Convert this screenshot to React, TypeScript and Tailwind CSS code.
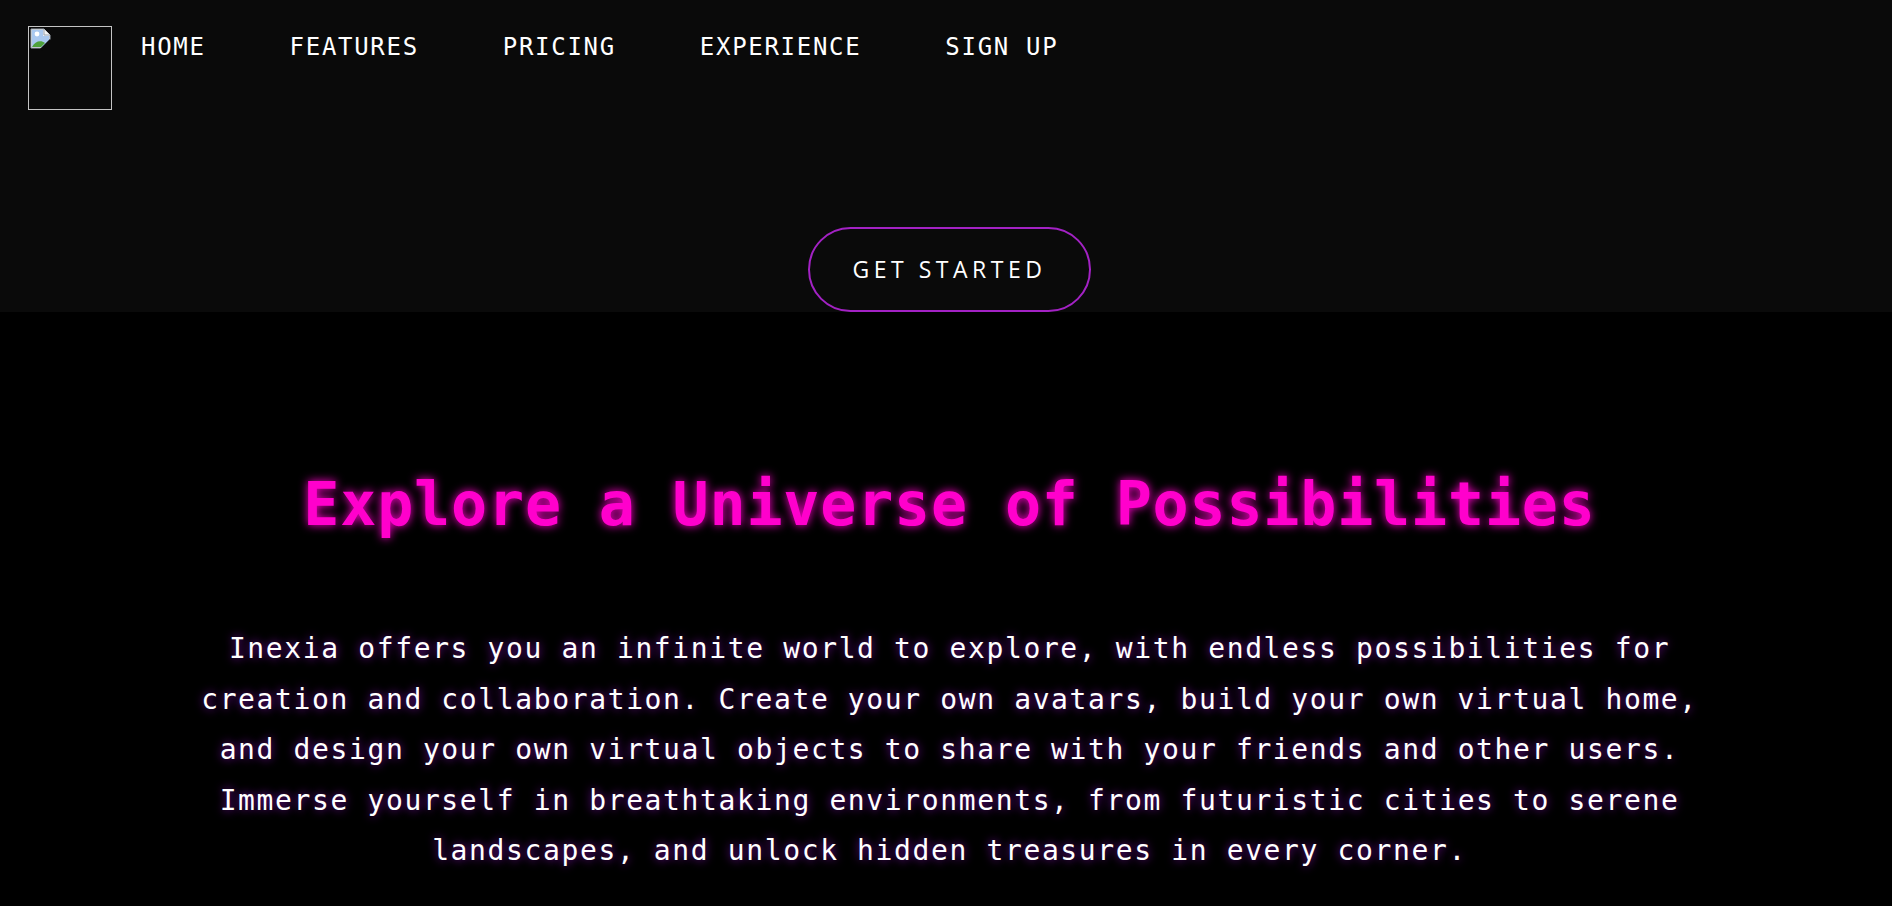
import React from "react";

const links = ["HOME", "FEATURES", "PRICING", "EXPERIENCE", "SIGN UP"];

function BrokenImage() {
  return (
    <svg width="22" height="24" viewBox="0 0 22 24" className="block">
      <path d="M1 1h13l6 6v7L14 20H1z" fill="#e9eef5" stroke="#9aa3ad" strokeWidth="1" />
      <path d="M2 2h11v6h6v5L13 19H2z" fill="#a9c8ef" />
      <circle cx="7" cy="6" r="2.4" fill="#ffffff" />
      <path d="M2 19c3-6 9-7 13-4l-4 4z" fill="#4fa23c" />
      <path d="M14 1v6h6" fill="#f4f4f4" stroke="#9aa3ad" strokeWidth="1" />
      <path d="M11 22l10-10" stroke="#0a0a0a" strokeWidth="3" />
    </svg>
  );
}

export default function App() {
  return (
    <div className="min-h-screen bg-black text-white font-['DejaVu_Sans_Mono',monospace]">
      {/* Top header */}
      <header className="h-[312px] bg-[#0a0a0a] flex flex-col">
        <nav className="flex items-start pt-[26px] pl-[28px]">
          <div className="w-[84px] h-[84px] border border-[#c4c4c4] p-[1px]">
            <BrokenImage />
          </div>
          <ul className="flex gap-[84px] ml-[29px] mt-[7px] text-[24px] leading-[28px] tracking-[1.7px] text-white">
            {links.map((l) => (
              <li key={l}>
                <a href="#">{l}</a>
              </li>
            ))}
          </ul>
        </nav>

        <div className="mt-auto flex justify-center pl-[7px]">
          <button className="w-[283px] h-[85px] rounded-full border-2 border-[#a322c4] bg-transparent text-white font-['Open_Sans',sans-serif] font-medium text-[23px] tracking-[4.5px]">
            GET STARTED
          </button>
        </div>
      </header>

      {/* Intro section */}
      <section className="pt-[157px] pl-[7px] flex flex-col items-center text-center">
        <h1 className="text-[60px] leading-[70px] font-bold tracking-[0.8px] text-[#ff00cc] [text-shadow:0_0_10px_#ff00cc]">
          Explore a Universe of Possibilities
        </h1>
        <p className="w-[1514px] mt-[85px] text-[28px] leading-[50.6px] tracking-[1.62px] text-white [text-shadow:0_0_10px_#7a10a8]">
          Inexia offers you an infinite world to explore, with endless possibilities for creation and
          collaboration. Create your own avatars, build your own virtual home, and design your own
          virtual objects to share with your friends and other users. Immerse yourself in breathtaking
          environments, from futuristic cities to serene landscapes, and unlock hidden treasures in
          every corner.
        </p>
      </section>
    </div>
  );
}
